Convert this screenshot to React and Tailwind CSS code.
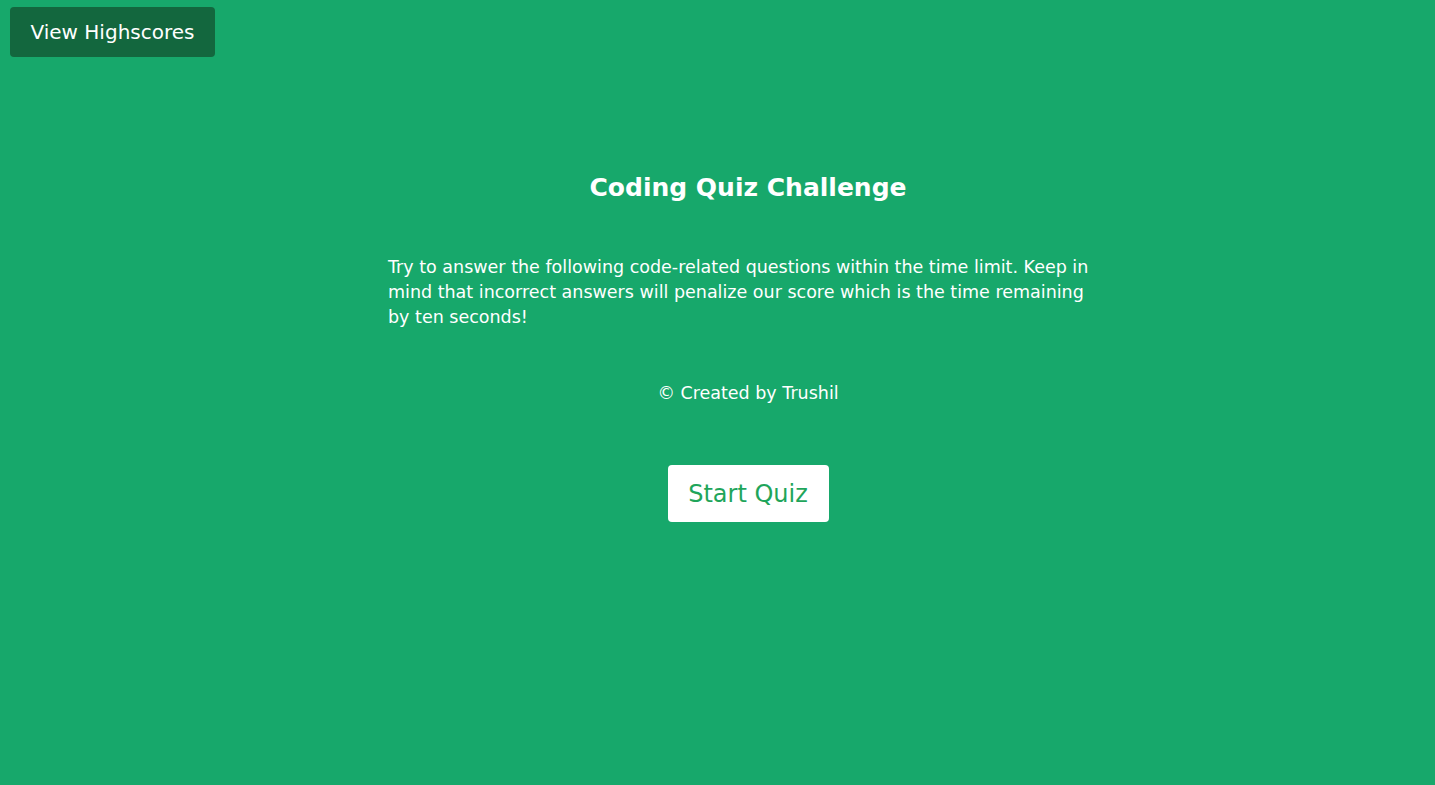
export default function App() {
  return (
    <div className="min-h-[785px] w-full bg-[#17a86b] text-white" style={{ fontFamily: '"DejaVu Sans", sans-serif' }}>
      <div className="pl-[10px] pt-[7px]">
        <button className="h-[50px] w-[205px] rounded-[4px] bg-[#13673e] text-[20px] text-white">
          View Highscores
        </button>
      </div>
      <div className="ml-[388px] w-[720px] flex flex-col items-center">
        <h1 className="mt-[113px] text-[25px] font-bold leading-[36px]">Coding Quiz Challenge</h1>
        <p className="mt-[49px] w-full text-left text-[17.5px] leading-[25px]">
          Try to answer the following code-related questions within the time limit. Keep in mind that incorrect answers will penalize our score which is the time remaining by ten seconds!
        </p>
        <p className="mt-[51px] text-[17.5px] leading-[25px]">© Created by Trushil</p>
        <button className="mt-[59px] h-[57px] w-[161px] rounded-[4px] bg-white text-[24px] text-[#1fa55b]">
          Start Quiz
        </button>
      </div>
    </div>
  );
}
